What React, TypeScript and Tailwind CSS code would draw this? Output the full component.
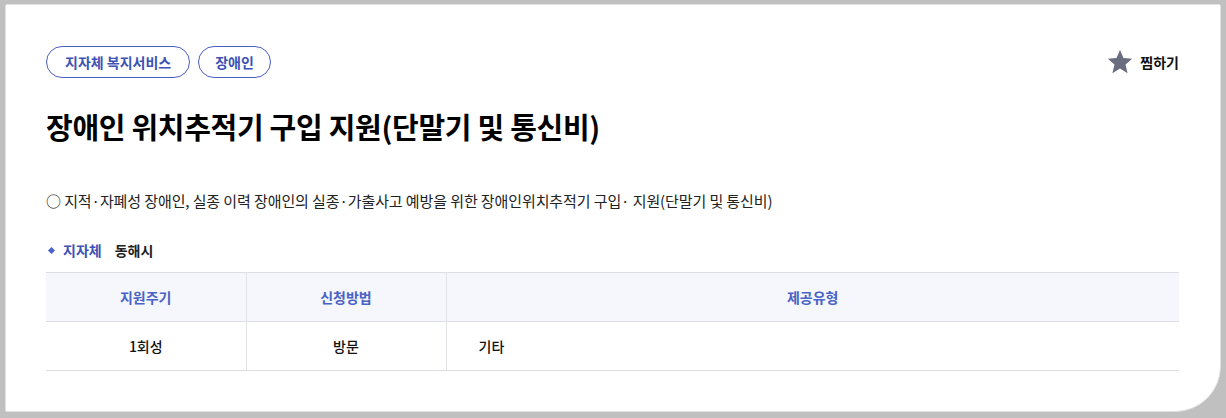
const font = { fontFamily: '"Noto Sans CJK KR", "Noto Sans", sans-serif' };

function StarIcon() {
  return (
    <svg width="26" height="26" viewBox="0 0 24 24" className="fill-[#6a6c80]">
      <path d="M12 1l3.2 7.4 8 .7-6.1 5.3 1.9 7.9L12 18.1 5 22.3l1.9-7.9L.8 9.1l8-.7z" />
    </svg>
  );
}

export default function App() {
  const rows = [{ cycle: "1회성", method: "방문", type: "기타" }];

  return (
    <div className="w-[1226px] h-[418px] bg-[#c0c0c0] pt-[4px] pl-[5px] pr-[5px] pb-[6px]" style={font}>
      <div className="h-full bg-white rounded-[2px] rounded-br-[46px] border border-[#e2e2e2] pl-[40px] pr-[41px] pt-[41px]">
        <div className="flex items-start justify-between">
          <div className="flex gap-2">
            <span className="h-[32px] px-[18px] flex items-center rounded-full border border-[#4b5fc2] text-[#3d52b6] text-[14px] font-bold">
              지자체 복지서비스
            </span>
            <span className="h-[32px] px-[16px] flex items-center rounded-full border border-[#4b5fc2] text-[#3d52b6] text-[14px] font-bold">
              장애인
            </span>
          </div>
          <button className="flex items-center gap-[7px] mt-[3px] text-[14px] font-bold text-[#111]">
            <StarIcon />
            찜하기
          </button>
        </div>

        <h1 className="mt-[28px] text-[29px] leading-[40px] font-bold text-black tracking-[-0.3px]">
          장애인 위치추적기 구입 지원(단말기 및 통신비)
        </h1>

        <p className="mt-[43px] text-[15px] leading-[24px] text-[#222] tracking-[-0.1px]">
          ○ 지적·자폐성 장애인, 실종 이력 장애인의 실종·가출사고 예방을 위한 장애인위치추적기 구입· 지원(단말기 및 통신비)
        </p>

        <div className="mt-[25px] flex items-center text-[14px] font-bold leading-[24px]">
          <span className="w-[5px] h-[5px] bg-[#4b63d0] rotate-45 ml-[3px] mr-[9px]" />
          <span className="text-[#3d52b6]">지자체</span>
          <span className="ml-[13px] text-[#222]">동해시</span>
        </div>

        <table className="mt-[10px] w-full border-collapse text-[14px]">
          <thead>
            <tr className="bg-[#f5f7fc] border-t border-b border-[#dcdee3]">
              <th className="w-[200px] h-[49px] font-bold text-[#4a62c6] border-r border-[#e0e2e6]">지원주기</th>
              <th className="w-[200px] h-[49px] font-bold text-[#4a62c6] border-r border-[#e0e2e6]">신청방법</th>
              <th className="h-[49px] font-bold text-[#4a62c6]">제공유형</th>
            </tr>
          </thead>
          <tbody>
            {rows.map((r, i) => (
              <tr key={i} className="border-b border-[#dcdee3]">
                <td className="h-[49px] text-center font-medium text-[#111] border-r border-[#e0e2e6]">{r.cycle}</td>
                <td className="h-[49px] text-center font-medium text-[#111] border-r border-[#e0e2e6]">{r.method}</td>
                <td className="h-[49px] pl-[32px] font-medium text-[#111]">{r.type}</td>
              </tr>
            ))}
          </tbody>
        </table>
      </div>
    </div>
  );
}
